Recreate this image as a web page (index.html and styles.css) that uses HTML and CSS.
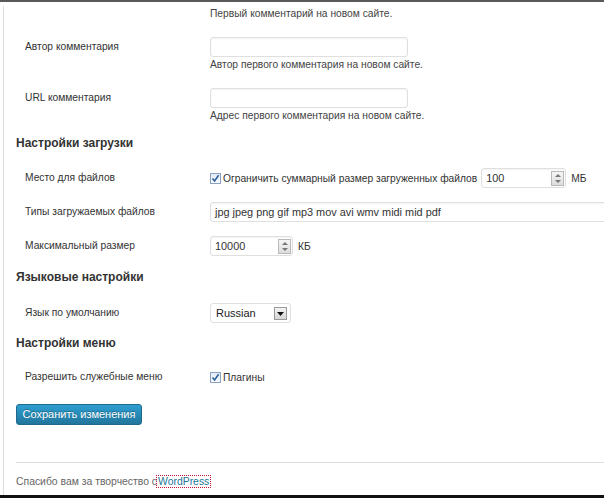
FILE: index.html
```html
<!DOCTYPE html>
<html lang="ru">
<head>
<meta charset="utf-8">
<link rel="stylesheet" href="styles.css">
</head>
<body>
<div class="frame">
  <div class="wrap">
    <div class="row first">
      <div class="label"></div>
      <div class="field"><p class="desc">Первый комментарий на новом сайте.</p></div>
    </div>
    <div class="row r-author">
      <div class="label">Автор комментария</div>
      <div class="field">
        <span class="input w-text"></span>
        <p class="desc">Автор первого комментария на новом сайте.</p>
      </div>
    </div>
    <div class="row r-url">
      <div class="label">URL комментария</div>
      <div class="field">
        <span class="input w-text"></span>
        <p class="desc">Адрес первого комментария на новом сайте.</p>
      </div>
    </div>

    <h3 class="h h1">Настройки загрузки</h3>
    <div class="row r-space">
      <div class="label">Место для файлов</div>
      <div class="field inline">
        <span class="cb"><svg width="9" height="9" viewBox="0 0 9 9"><path d="M1.5 4.5 L3.6 7 L7.6 1.2" fill="none" stroke="#2d5e9a" stroke-width="1.6"/></svg></span>
        <span class="txt">Ограничить суммарный размер загруженных файлов</span>
        <span class="input num w-mb">100<span class="spin"><i class="up"></i><i class="dn"></i></span></span>
        <span class="unit">МБ</span>
      </div>
    </div>
    <div class="row r-types">
      <div class="label">Типы загружаемых файлов</div>
      <div class="field">
        <span class="input w-wide">jpg jpeg png gif mp3 mov avi wmv midi mid pdf</span>
      </div>
    </div>
    <div class="row r-max">
      <div class="label">Максимальный размер</div>
      <div class="field inline">
        <span class="input num w-kb">10000<span class="spin"><i class="up"></i><i class="dn"></i></span></span>
        <span class="unit">КБ</span>
      </div>
    </div>

    <h3 class="h h2">Языковые настройки</h3>
    <div class="row r-lang">
      <div class="label">Язык по умолчанию</div>
      <div class="field">
        <span class="select">Russian<span class="arrow"><svg width="7" height="4" viewBox="0 0 7 4"><path d="M0 0 H7 L3.5 4 Z" fill="#111"/></svg></span></span>
      </div>
    </div>

    <h3 class="h h3">Настройки меню</h3>
    <div class="row r-menu">
      <div class="label">Разрешить служебные меню</div>
      <div class="field inline">
        <span class="cb"><svg width="9" height="9" viewBox="0 0 9 9"><path d="M1.5 4.5 L3.6 7 L7.6 1.2" fill="none" stroke="#2d5e9a" stroke-width="1.6"/></svg></span>
        <span class="txt">Плагины</span>
      </div>
    </div>

    <div class="actions"><span class="btn">Сохранить изменения</span></div>

    <div class="footer">
      <span>Спасибо вам за творчество с</span><a class="link" href="#">WordPress</a>
    </div>
  </div>
</div>
</body>
</html>
```

FILE: styles.css
```css
* { box-sizing: border-box; }
html, body { margin: 0; padding: 0; background: #fff; }
body {
  font-family: "Liberation Sans", Arial, sans-serif;
  font-size: 10.25px;
  color: #333;
  width: 604px;
  height: 498px;
  overflow: hidden;
}
.frame {
  height: 498px;
  border-top: 2px solid #5a5a5a;
  border-bottom: 3px solid #111;
  padding-left: 3px;
  overflow: hidden;
}
.wrap {
  height: 100%;
  border-left: 1px solid #dedede;
  padding-left: 12px;
  position: relative;
}
.row {
  display: flex;
  align-items: flex-start;
}
.label {
  width: 194px;
  flex: none;
  padding-left: 9px;
  line-height: 20px;
  color: #333;
}
.field { flex: 1; min-width: 0; }
.field.inline { display: flex; align-items: center; height: 20px; white-space: nowrap; }
.desc { margin: 0; line-height: 16px; color: #444; }
.first { margin-top: 4px; }
.r-author { margin-top: 15px; }
.r-url { margin-top: 15px; }
.input {
  display: flex;
  align-items: center;
  height: 20px;
  border: 1px solid #dfdfdf;
  border-radius: 3px;
  box-shadow: inset 0 1px 2px rgba(0,0,0,0.05);
  background: #fff;
  padding: 0 4px;
  color: #333;
  font-size: 10.9px;
  white-space: nowrap;
  position: relative;
}
.w-text { width: 198px; }
.w-wide { width: 420px; }
.w-mb { width: 85px; margin-left: 4px; }
.w-kb { width: 83px; }
.spin {
  position: absolute;
  right: 1px;
  top: 2px;
  width: 13px;
  height: 15px;
  border: 1px solid #b9b9b9;
  background: linear-gradient(#f6f6f6, #dcdcdc);
  display: flex;
  flex-direction: column;
  align-items: center;
  justify-content: space-around;
}
.spin i { display: block; width: 0; height: 0; border-left: 3px solid transparent; border-right: 3px solid transparent; }
.spin .up { border-bottom: 3px solid #777; }
.spin .dn { border-top: 3px solid #777; }
.unit { margin-left: 5px; }
.cb {
  width: 11px;
  height: 11px;
  border: 1px solid #8aa2bd;
  background: linear-gradient(#e3ecf6, #f7fbff);
  display: inline-flex;
  align-items: center;
  justify-content: center;
  margin-right: 2px;
  flex: none;
}
.h {
  margin: 0;
  font-size: 12px;
  font-weight: bold;
  line-height: 18px;
  color: #333;
}
.h1 { margin-top: 10px; }
.r-space { margin-top: 16px; }
.r-types { margin-top: 14px; }
.r-max { margin-top: 14px; }
.h2 { margin-top: 12px; }
.r-lang { margin-top: 17px; }
.h3 { margin-top: 11px; }
.r-menu { margin-top: 15px; }
.select {
  display: flex;
  align-items: center;
  width: 81px;
  height: 20px;
  border: 1px solid #dfdfdf;
  border-radius: 3px;
  padding-left: 5px;
  color: #222;
  font-size: 11px;
  position: relative;
}
.arrow {
  position: absolute;
  right: 3px;
  top: 3px;
  width: 13px;
  height: 13px;
  border: 1px solid #9a9a9a;
  background: linear-gradient(#f4f4f4, #d6d6d6);
  display: flex;
  align-items: center;
  justify-content: center;
}
.actions { margin-top: 17px; }
.btn {
  display: inline-block;
  width: 126px;
  height: 21px;
  line-height: 19px;
  font-size: 11px;
  text-align: center;
  color: #fff;
  border: 1px solid #1e6a8d;
  border-radius: 3px;
  background: linear-gradient(#2e9fd2, #21759b);
  text-shadow: 0 -1px 0 rgba(0,0,0,0.3);
  white-space: nowrap;
}
.footer {
  position: absolute;
  left: 12px;
  right: 0;
  top: 456px;
  border-top: 1px solid #dedede;
  padding-top: 11px;
  line-height: 16px;
  font-size: 10.4px;
  color: #666;
}
.link {
  color: #21759b;
  text-decoration: none;
  outline: 1px dotted #c0103a;
  outline-offset: 0;
  padding: 0 1px;
}
```
